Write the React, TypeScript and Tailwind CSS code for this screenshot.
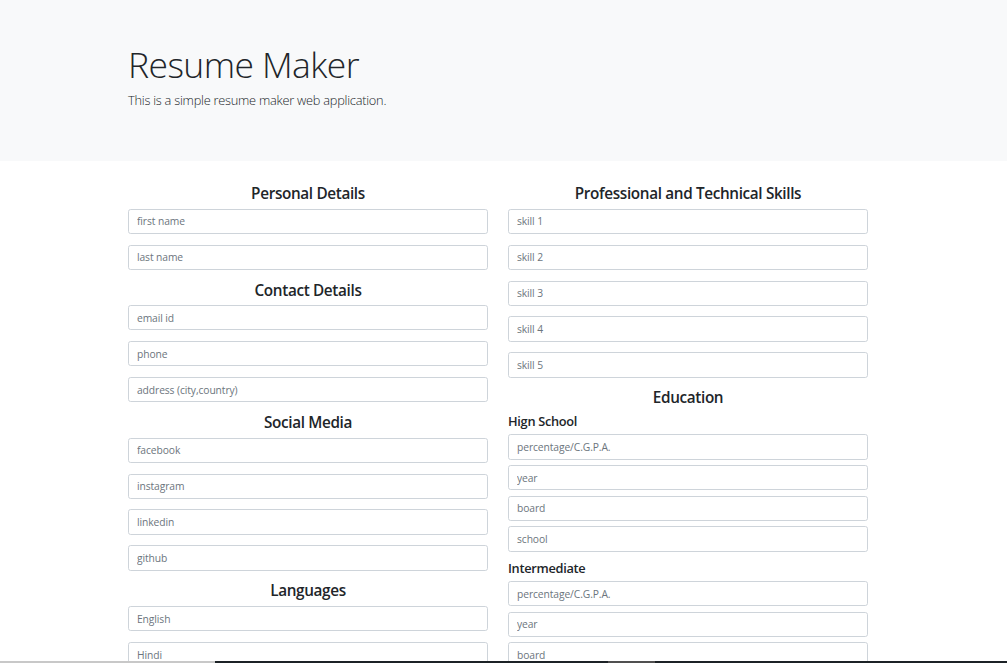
import React from "react";

const personal = ["first name", "last name"];
const contact = ["email id", "phone", "address (city,country)"];
const social = ["facebook", "instagram", "linkedin", "github"];
const languages = ["English", "Hindi", "Telugu"];
const skills = ["skill 1", "skill 2", "skill 3", "skill 4", "skill 5"];
const eduFields = ["percentage/C.G.P.A.", "year", "board", "school"];

function Field({ placeholder, tight }: { placeholder: string; tight?: boolean }) {
    return (
        <input
            type="text"
            placeholder={placeholder}
            className={`block w-full h-[25.33px] px-[8px] border border-[#ced4da] rounded-[2.67px] bg-white text-[10.3px] tracking-[-0.1px] text-[#495057] placeholder:text-[#6c757d] outline-none ${tight ? "mb-[5.33px]" : "mb-[10.67px]"}`}
        />
    );
}

function SectionTitle({ children }: { children: React.ReactNode }) {
    return (
        <h4 className="text-center text-[15.3px] leading-[19.2px] font-semibold tracking-[-0.35px] text-[#212529] mb-[5.33px]">
            {children}
        </h4>
    );
}

function Level({ title, school }: { title: string; school?: boolean }) {
    return (
        <div className="mb-[8px]">
            <h5 className="text-[12.8px] leading-[16px] font-semibold tracking-[-0.3px] text-[#212529] mb-[5.33px]">{title}</h5>
            {eduFields.map((f) => (
                <Field key={f} placeholder={school || f !== "school" ? f : "college"} tight />
            ))}
        </div>
    );
}

export default function App() {
    return (
        <div className="min-h-screen bg-white text-[#212529] font-['Open_Sans',sans-serif]">
            {/* Jumbotron */}
            <div className="bg-[#f8f9fa] h-[161px]">
                <div className="ml-[128px] pt-[42px]">
                    <h1 className="text-[35.5px] leading-[44.8px] font-light tracking-[-0.6px] mb-[3px]">Resume Maker</h1>
                    <p className="text-[12.8px] leading-[20px] font-light tracking-[-0.25px]">This is a simple resume maker web application.</p>
                </div>
            </div>

            {/* Form */}
            <div className="ml-[128px] w-[740px] pt-[23px] grid grid-cols-2 gap-x-[20px] items-start">
                <div>
                    <SectionTitle>Personal Details</SectionTitle>
                    {personal.map((p) => <Field key={p} placeholder={p} />)}
                    <SectionTitle>Contact Details</SectionTitle>
                    {contact.map((p) => <Field key={p} placeholder={p} />)}
                    <SectionTitle>Social Media</SectionTitle>
                    {social.map((p) => <Field key={p} placeholder={p} />)}
                    <SectionTitle>Languages</SectionTitle>
                    {languages.map((p) => <Field key={p} placeholder={p} />)}
                </div>
                <div>
                    <SectionTitle>Professional and Technical Skills</SectionTitle>
                    {skills.map((p) => <Field key={p} placeholder={p} />)}
                    <SectionTitle>Education</SectionTitle>
                    <Level title="Hign School" school />
                    <Level title="Intermediate" />
                    <Level title="Graduation" />
                </div>
            </div>

            {/* bottom strip */}
            <div className="fixed bottom-0 left-0 right-0 h-[2px] flex">
                <div className="w-[215px] bg-[#c8c8c8]" />
                <div className="w-[393px] bg-[#1c2226]" />
                <div className="w-[47px] bg-[#505050]" />
                <div className="flex-1 bg-[#1c2226]" />
            </div>
        </div>
    );
}
